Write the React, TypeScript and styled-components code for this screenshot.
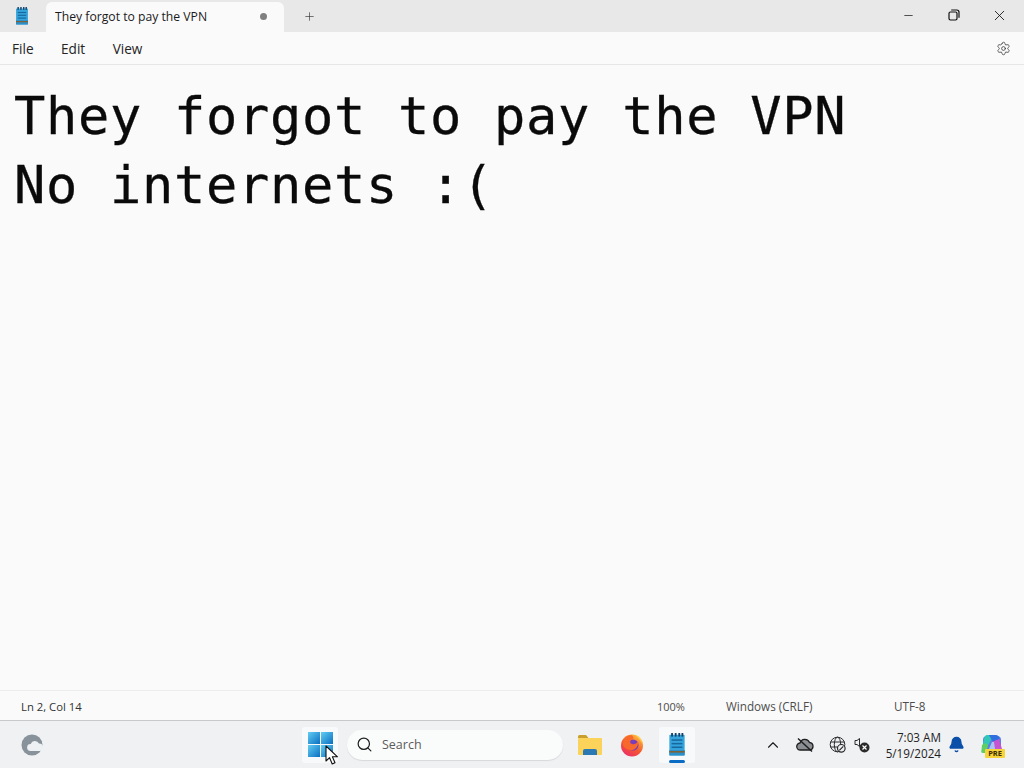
import { createGlobalStyle, styled } from 'styled-components';
import { Bell, ChevronUp, Minus, Plus, Search, Settings, X } from 'lucide-react';

const GlobalStyle = createGlobalStyle`
  html, body {
    margin: 0;
    padding: 0;
    width: 1024px;
    height: 768px;
    overflow: hidden;
    background: #fafafa;
    font-family: 'Open Sans', 'Noto Sans', sans-serif;
  }
`;

function NotepadIcon({ size = 14 }: { size?: number }) {
  return (
    <svg width={size} height={size * 1.3} viewBox="0 0 20 26">
      <rect x="1.5" y="2" width="17" height="23" rx="1" fill="#35a4dc" />
      <rect x="1.5" y="19" width="17" height="6" fill="#2b8fc8" />
      <rect x="1.5" y="20" width="17" height="1.8" fill="#7d6238" />
      <g fill="#123f66">
        <rect x="3.500" y="0" width="2" height="4" />
        <rect x="7.500" y="0" width="2" height="4" />
        <rect x="11.500" y="0" width="2" height="4" />
        <rect x="15" y="0" width="2" height="4" />
      </g>
      <g fill="#17689f">
        <rect x="4" y="7" width="12" height="1.7" />
        <rect x="4" y="11" width="12" height="1.7" />
        <rect x="4" y="15" width="12" height="1.7" />
      </g>
    </svg>
  );
}

function MaximizeIcon() {
  return (
    <svg width="12" height="12" viewBox="0 0 12 12" fill="none" stroke="#111" strokeWidth="1.2">
      <rect x="1" y="3" width="8" height="8" rx="1.4" />
      <path d="M3.200 1h5.600A2.200 2.200 0 0 1 11 3.200v5.600" />
    </svg>
  );
}

function WeatherIcon() {
  return (
    <svg width="22" height="22" viewBox="0 0 22 22">
      <circle cx="11" cy="11" r="10.500" fill="#87929a" />
      <path d="M9.500 17a3.500 3.500 0 0 1 .2-7A4.500 4.500 0 0 1 18 9.500a3.800 3.800 0 0 1 1 7.500z" fill="#eef1f3" />
    </svg>
  );
}

function StartIcon() {
  return (
    <svg width="25" height="25" viewBox="0 0 25 25">
      <defs>
        <linearGradient id="startTile" x1="0" y1="0" x2="1" y2="1">
          <stop offset="0" stopColor="#62cdf4" />
          <stop offset="1" stopColor="#0a6fc0" />
        </linearGradient>
      </defs>
      <rect x="0" y="0" width="12" height="12" fill="url(#startTile)" />
      <rect x="13" y="0" width="12" height="12" fill="url(#startTile)" />
      <rect x="0" y="13" width="12" height="12" fill="url(#startTile)" />
      <rect x="13" y="13" width="12" height="12" fill="url(#startTile)" />
    </svg>
  );
}

function FolderIcon() {
  return (
    <svg width="26" height="22" viewBox="0 0 26 22">
      <path d="M1 2.500A1.500 1.500 0 0 1 2.500 1H9l2.500 3H1z" fill="#c9a02e" />
      <rect x="1" y="4" width="24" height="17" rx="1" fill="#fbd35a" />
      <path d="M6 21v-4a2 2 0 0 1 2-2h10a2 2 0 0 1 2 2v4z" fill="#2a79b4" />
    </svg>
  );
}

function FirefoxIcon() {
  return (
    <svg width="24" height="24" viewBox="0 0 24 24">
      <defs>
        <linearGradient id="foxBody" x1="0.8" y1="0" x2="0.2" y2="1">
          <stop offset="0" stopColor="#ffc23a" />
          <stop offset="0.55" stopColor="#f4582f" />
          <stop offset="1" stopColor="#ec2a6c" />
        </linearGradient>
      </defs>
      <circle cx="12" cy="12.500" r="11" fill="url(#foxBody)" />
      <circle cx="13" cy="12" r="5.500" fill="#7b3db8" />
      <path d="M3 9c1-3 3-6 8-7 2 1 3 2 2 4-3 1-4 4-1 5 3 1 5-1 6-3 1 6-4 10-8 9-5-1-8-4-7-8z" fill="#f8672c" />
      <path d="M15 2c4 1 7 5 8 9-2-2-3-5-8-9z" fill="#ffd24a" />
    </svg>
  );
}

function CloudOffFilled() {
  return (
    <svg width="18" height="16" viewBox="0 0 18 16">
      <path d="M4.500 13a3.500 3.500 0 0 1-.5-7A5 5 0 0 1 13.500 5.500 3.800 3.800 0 0 1 14 13z" fill="#8b8f93" stroke="#1e1e1e" strokeWidth="1.300" />
      <path d="M2 1.500l14 13" stroke="#1e1e1e" strokeWidth="1.500" />
    </svg>
  );
}

function GlobeBlockedIcon() {
  return (
    <svg width="17" height="17" viewBox="0 0 17 17" fill="none" stroke="#2a2a2a" strokeWidth="1">
      <circle cx="8.500" cy="8.500" r="7.300" />
      <ellipse cx="8.500" cy="8.500" rx="3.200" ry="7.300" />
      <path d="M1.500 6h14M1.500 11h9" />
      <circle cx="12.300" cy="12.300" r="3.800" fill="#eef0f2" strokeWidth="1.200" />
      <path d="M10.300 14.300l4-4" strokeWidth="1.200" />
    </svg>
  );
}

function SpeakerMutedIcon() {
  return (
    <svg width="16" height="16" viewBox="0 0 16 16">
      <path d="M1 3.500h2L5.500 1.500v8L3 7.500H1z" fill="none" stroke="#2a2a2a" strokeWidth="1" />
      <circle cx="10.500" cy="10.500" r="5" fill="#2a2a2a" />
      <path d="M8.500 8.500l4 4M12.500 8.500l-4 4" stroke="#fff" strokeWidth="1.200" />
    </svg>
  );
}

function CopilotIcon() {
  return (
    <svg width="24" height="24" viewBox="0 0 24 24">
      <rect x="3" y="3" width="18" height="16" rx="4" fill="#5a7fe6" />
      <path d="M7 2h6l-4 9-7 5 2-10c.4-2 1.500-4 3-4z" fill="#31c6b8" />
      <path d="M2 12c3-2 6-2 6 1l-2 7H3c-2 0-2-2-1.500-3z" fill="#5fcf63" />
      <path d="M9 2h7c2 0 3 2 3.500 4L13 9z" fill="#2f6fe0" />
      <path d="M12 9l7-3 3 10c.4 2-1 3-2 3h-8z" fill="#c653d0" />
      <path d="M9 16l3-7 2 0 1 7z" fill="#a9c4f2" />
    </svg>
  );
}

function ArrowCursor() {
  return (
    <svg width="14" height="21" viewBox="0 0 14 21">
      <path d="M1 1v15l3.600-3.300L7.200 19l2.800-1.200-2.600-6H12.500z" fill="#fff" stroke="#111" strokeWidth="1.100" strokeLinejoin="round" />
    </svg>
  );
}

export default function App() {
  return (
    <>
      <GlobalStyle />
      <Page>
        <TitleBar>
          <AppIconSlot>
            <NotepadIcon />
          </AppIconSlot>
          <Tab>
            <TabTitle>They forgot to pay the VPN</TabTitle>
            <UnsavedDot />
          </Tab>
          <NewTab>
            <Plus size={13} strokeWidth={1.2} />
          </NewTab>
          <WindowControls>
            <WindowButton>
              <Minus size={13} strokeWidth={1.3} />
            </WindowButton>
            <WindowButton>
              <MaximizeIcon />
            </WindowButton>
            <WindowButton>
              <X size={17} strokeWidth={1.2} />
            </WindowButton>
          </WindowControls>
        </TitleBar>

        <MenuBar>
          <MenuItem>File</MenuItem>
          <MenuItem>Edit</MenuItem>
          <MenuItem>View</MenuItem>
          <SettingsSlot>
            <Settings size={15} strokeWidth={1.2} />
          </SettingsSlot>
        </MenuBar>

        <Editor>
          <EditorLine>They forgot to pay the VPN</EditorLine>
          <EditorLine>No internets :(</EditorLine>
        </Editor>

        <StatusBar>
          <StatusCell>Ln 2, Col 14</StatusCell>
          <StatusCell>100%</StatusCell>
          <StatusCell>Windows (CRLF)</StatusCell>
          <StatusCell>UTF-8</StatusCell>
        </StatusBar>

        <Taskbar>
          <TaskbarLeft>
            <WeatherIcon />
          </TaskbarLeft>
          <TaskbarCenter>
            <TaskButton $active>
              <StartIcon />
              <Cursor>
                <ArrowCursor />
              </Cursor>
            </TaskButton>
            <SearchBox>
              <Search size={17} strokeWidth={1.7} color="#1c1c1c" />
              <SearchText>Search</SearchText>
            </SearchBox>
            <TaskButton>
              <FolderIcon />
            </TaskButton>
            <FirefoxButton>
              <FirefoxIcon />
            </FirefoxButton>
            <TaskButton $active>
              <NotepadIcon size={18} />
              <RunningBar />
            </TaskButton>
          </TaskbarCenter>
          <Tray>
            <TrayIcon $width={32}>
              <ChevronUp size={18} strokeWidth={1.5} color="#1c1c1c" />
            </TrayIcon>
            <TrayIcon $width={32}>
              <CloudOffFilled />
            </TrayIcon>
            <TrayIcon $width={32}>
              <GlobeBlockedIcon />
            </TrayIcon>
            <TrayIcon $width={18}>
              <SpeakerMutedIcon />
            </TrayIcon>
            <Clock>
              <span>7:03 AM</span>
              <span>5/19/2024</span>
            </Clock>
            <TrayIcon $width={30}>
              <Bell size={17} fill="#0a4fa8" color="#0a4fa8" />
            </TrayIcon>
            <CopilotSlot>
              <CopilotIcon />
              <PreBadge>PRE</PreBadge>
            </CopilotSlot>
          </Tray>
        </Taskbar>
      </Page>
    </>
  );
}

const Page = styled.div`
  width: 1024px;
  height: 768px;
  display: flex;
  flex-direction: column;
  color: #1b1b1b;
`;

const TitleBar = styled.div`
  height: 32px;
  flex: none;
  display: flex;
  align-items: flex-end;
  background: #e8e8e8;
`;

const AppIconSlot = styled.div`
  width: 46px;
  height: 32px;
  padding-right: 3px;
  box-sizing: border-box;
  display: flex;
  align-items: center;
  justify-content: center;
`;

const Tab = styled.div`
  width: 238px;
  height: 30px;
  box-sizing: border-box;
  padding: 0 17px 2px 9px;
  display: flex;
  align-items: center;
  justify-content: space-between;
  background: #fafafa;
  border-radius: 6px 6px 0 0;
`;

const TabTitle = styled.span`
  font-size: 12.200px;
  color: #1a1a1a;
`;

const UnsavedDot = styled.span`
  width: 7px;
  height: 7px;
  border-radius: 50%;
  background: #808080;
`;

const NewTab = styled.div`
  width: 50px;
  height: 32px;
  display: flex;
  align-items: center;
  justify-content: center;
  color: #333;
`;

const WindowControls = styled.div`
  margin-left: auto;
  height: 32px;
  display: flex;
  padding-right: 2px;
`;

const WindowButton = styled.div`
  width: 45.500px;
  height: 30px;
  display: flex;
  align-items: center;
  justify-content: center;
  color: #111;
`;

const MenuBar = styled.div`
  height: 33px;
  flex: none;
  box-sizing: border-box;
  padding: 1px 0 0 12px;
  display: flex;
  align-items: center;
  gap: 27.500px;
  background: #fafafa;
  border-bottom: 1px solid #e6e6e6;
`;

const MenuItem = styled.span`
  font-size: 13.600px;
  color: #242424;
`;

const SettingsSlot = styled.div`
  margin-left: auto;
  width: 42px;
  display: flex;
  justify-content: center;
  color: #333;
`;

const Editor = styled.div`
  flex: 1;
  box-sizing: border-box;
  padding: 17px 0 0 14px;
  background: #fafafa;
`;

const EditorLine = styled.div`
  font-family: 'DejaVu Sans Mono', 'Liberation Mono', monospace;
  font-size: 52px;
  line-height: 69px;
  letter-spacing: 0.7px;
  color: #0a0a0a;
  white-space: pre;
  -webkit-text-stroke: 0.3px #0a0a0a;
`;

const StatusBar = styled.div`
  height: 31px;
  flex: none;
  box-sizing: border-box;
  padding-top: 1px;
  display: grid;
  grid-template-columns: 657px 69px 168px 1fr;
  align-items: center;
  background: #fafafa;
  border-top: 1px solid #ededed;
  border-bottom: 1px solid #c9c9c9;
`;

const StatusCell = styled.span`
  font-size: 11.700px;
  color: #4d4d4d;
  &:first-child {
    padding-left: 21px;
    font-size: 11.300px;
    color: #333;
  }
  &:nth-child(2) {
    font-size: 11px;
  }
`;

const Taskbar = styled.div`
  height: 47px;
  flex: none;
  display: flex;
  align-items: center;
  background: #eff1f3;
`;

const TaskbarLeft = styled.div`
  width: 302px;
  box-sizing: border-box;
  padding-left: 21px;
  display: flex;
  align-items: center;
`;

const TaskbarCenter = styled.div`
  display: flex;
  align-items: center;
  gap: 7px;
`;

const TaskButton = styled.div<{ $active?: boolean }>`
  position: relative;
  width: 36px;
  height: 36px;
  display: flex;
  align-items: center;
  justify-content: center;
  border-radius: 3px;
  background: ${(p) => (p.$active ? '#f8f9fa' : 'transparent')};
`;

const FirefoxButton = styled(TaskButton)`
  box-sizing: border-box;
  padding-right: 2px;
  margin-right: 1px;
`;

const Cursor = styled.div`
  position: absolute;
  left: 23px;
  top: 18px;
  line-height: 0;
`;

const RunningBar = styled.span`
  position: absolute;
  left: 10px;
  bottom: 0;
  width: 16px;
  height: 3px;
  border-radius: 2px;
  background: #0a6cc4;
`;

const SearchBox = styled.div`
  width: 216px;
  height: 30px;
  margin: 0 2px;
  box-sizing: border-box;
  padding-left: 9px;
  display: flex;
  align-items: center;
  gap: 9px;
  border-radius: 15px;
  background: #fafbfb;
  box-shadow: 0 1px 1px rgba(0, 0, 0, 0.1);
`;

const SearchText = styled.span`
  font-size: 12.500px;
  color: #5c5c5c;
`;

const Tray = styled.div`
  margin-left: auto;
  display: flex;
  align-items: center;
  padding-right: 20px;
`;

const TrayIcon = styled.div<{ $width: number }>`
  width: ${(p) => p.$width}px;
  display: flex;
  align-items: center;
  justify-content: center;
`;

const Clock = styled.div`
  width: 70px;
  display: flex;
  flex-direction: column;
  align-items: flex-end;
  font-size: 11.700px;
  line-height: 16px;
  color: #1f1f1f;
`;

const CopilotSlot = styled.div`
  position: relative;
  width: 24px;
  height: 24px;
  margin-left: 9px;
`;

const PreBadge = styled.span`
  position: absolute;
  right: -1px;
  bottom: -1px;
  padding: 0 3px;
  border-radius: 1px;
  background: #f6d43a;
  font-size: 7.500px;
  line-height: 9px;
  font-weight: 700;
  color: #3a2c00;
`;
